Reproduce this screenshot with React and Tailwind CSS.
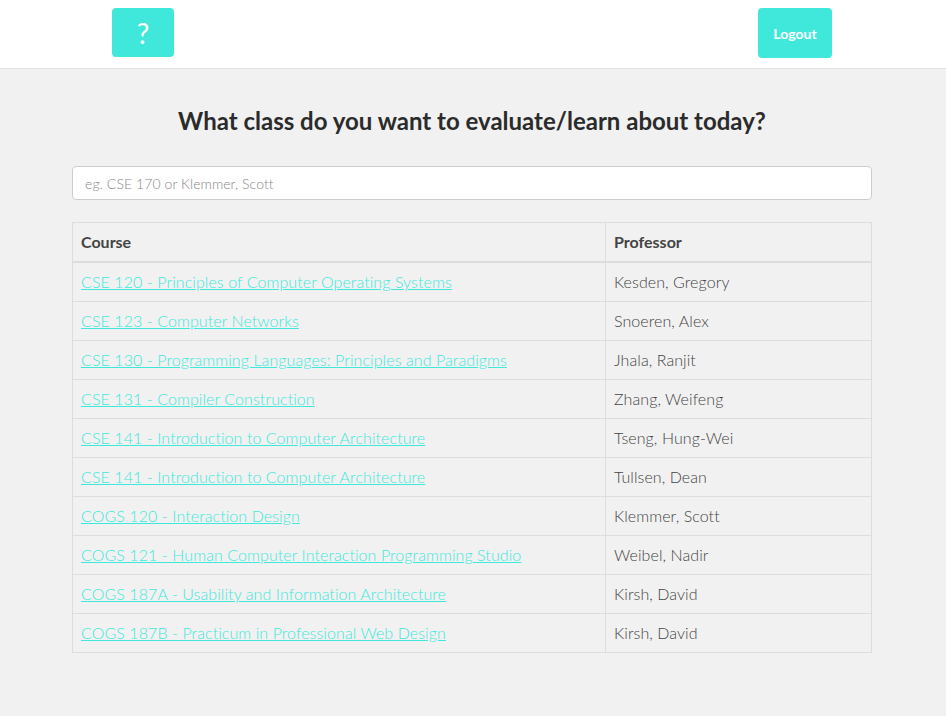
import React, { useState } from 'react';

const courses = [
  ['CSE 120 - Principles of Computer Operating Systems', 'Kesden, Gregory'],
  ['CSE 123 - Computer Networks', 'Snoeren, Alex'],
  ['CSE 130 - Programming Languages: Principles and Paradigms', 'Jhala, Ranjit'],
  ['CSE 131 - Compiler Construction', 'Zhang, Weifeng'],
  ['CSE 141 - Introduction to Computer Architecture', 'Tseng, Hung-Wei'],
  ['CSE 141 - Introduction to Computer Architecture', 'Tullsen, Dean'],
  ['COGS 120 - Interaction Design', 'Klemmer, Scott'],
  ['COGS 121 - Human Computer Interaction Programming Studio', 'Weibel, Nadir'],
  ['COGS 187A - Usability and Information Architecture', 'Kirsh, David'],
  ['COGS 187B - Practicum in Professional Web Design', 'Kirsh, David'],
];

function App() {
  const [query, setQuery] = useState('');

  return (
    <div className="min-h-screen bg-[#f1f1f1] font-['Lato',sans-serif] text-[#333]">
      {/* Header */}
      <header className="h-[69px] bg-white border-b border-[#e3e3e3] flex items-start pt-2">
        <div className="w-full flex justify-between pl-[112px] pr-[114px]">
          <button className="w-[62px] h-[49px] rounded-[4px] bg-[#40e8dc] text-white text-[28px] leading-none flex items-center justify-center">
            ?
          </button>
          <button className="w-[74px] h-[50px] rounded-[4px] bg-[#40e8dc] text-white text-[14px] font-bold">
            Logout
          </button>
        </div>
      </header>

      <main className="w-[800px] ml-[72px] pt-[36px]">
        <h1 className="text-center text-[24px] font-bold text-[#2b2b2b] leading-[32px]">
          What class do you want to evaluate/learn about today?
        </h1>

        <input
          type="text"
          value={query}
          onChange={(e) => setQuery(e.target.value)}
          placeholder="eg. CSE 170 or Klemmer, Scott"
          className="mt-[29px] w-full h-[34px] px-3 bg-white border border-[#ccc] rounded-[4px] text-[14px] font-light tracking-[0.08px] placeholder-[#888] outline-none"
        />

        <table className="mt-[22px] w-full border-collapse border border-[#ddd] text-[16px] leading-[22px]">
          <thead>
            <tr>
              <th className="w-[533px] text-left font-bold text-[#444] px-2 py-2 border border-[#ddd] border-b-2">Course</th>
              <th className="text-left font-bold text-[#444] px-2 py-2 border border-[#ddd] border-b-2">Professor</th>
            </tr>
          </thead>
          <tbody>
            {courses.map(([course, prof], i) => (
              <tr key={i}>
                <td className="px-2 py-2 border border-[#ddd] font-light tracking-[0.08px]">
                  <a href="#" className="text-[#40e8dc] underline">{course}</a>
                </td>
                <td className="px-2 py-2 border border-[#ddd] text-[#444] font-light tracking-[0.08px]">{prof}</td>
              </tr>
            ))}
          </tbody>
        </table>
      </main>
    </div>
  );
}

export default App;
